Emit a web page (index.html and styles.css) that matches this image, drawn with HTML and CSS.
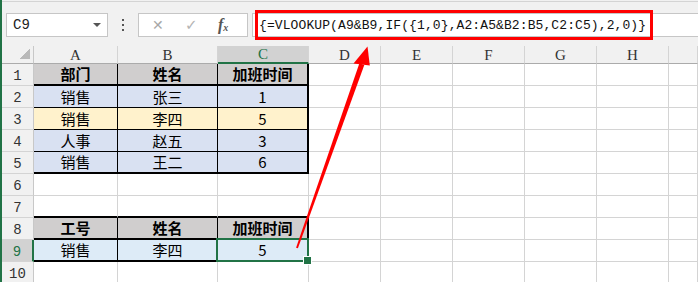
FILE: index.html
```html
<!DOCTYPE html>
<html lang="zh">
<head>
<meta charset="utf-8">
<title>VLOOKUP</title>
<link rel="stylesheet" href="styles.css">
</head>
<body>
<div class="fbar">
  <div class="namebox"><span class="nb-text">C9</span><span class="nb-drop"></span></div>
  <div class="dots"><i></i><i></i><i></i></div>
  <div class="btnbox">
    <span class="fb-x">✕</span>
    <span class="fb-ok">✓</span>
    <span class="fb-fx">f<sub>x</sub></span>
  </div>
  <div class="fbox">
    <span class="formula">{=VLOOKUP(A9&amp;B9,IF({1,0},A2:A5&amp;B2:B5,C2:C5),2,0)}</span>
    <span class="redbox"></span>
  </div>
</div>
<div class="sheet">
  <div class="c corner"><span class="tri"></span></div>
  <div class="c ch">A</div><div class="c ch">B</div><div class="c ch sel">C</div><div class="c ch">D</div><div class="c ch">E</div><div class="c ch">F</div><div class="c ch">G</div><div class="c ch">H</div><div class="c ch"></div>

  <div class="c rh">1</div>
  <div class="c th br1 bb2">部门</div><div class="c th br1 bb2">姓名</div><div class="c th br2 bb2">加班时间</div>
  <div class="c"></div><div class="c"></div><div class="c"></div><div class="c"></div><div class="c"></div><div class="c"></div>

  <div class="c rh">2</div>
  <div class="c blue br1 bb1">销售</div><div class="c blue br1 bb1">张三</div><div class="c blue br2 bb1">1</div>
  <div class="c"></div><div class="c"></div><div class="c"></div><div class="c"></div><div class="c"></div><div class="c"></div>

  <div class="c rh">3</div>
  <div class="c yel br1 bb1">销售</div><div class="c yel br1 bb1">李四</div><div class="c yel br2 bb1">5</div>
  <div class="c"></div><div class="c"></div><div class="c"></div><div class="c"></div><div class="c"></div><div class="c"></div>

  <div class="c rh">4</div>
  <div class="c blue br1 bb1">人事</div><div class="c blue br1 bb1">赵五</div><div class="c blue br2 bb1">3</div>
  <div class="c"></div><div class="c"></div><div class="c"></div><div class="c"></div><div class="c"></div><div class="c"></div>

  <div class="c rh">5</div>
  <div class="c blue br1 bb2">销售</div><div class="c blue br1 bb2">王二</div><div class="c blue br2 bb2">6</div>
  <div class="c"></div><div class="c"></div><div class="c"></div><div class="c"></div><div class="c"></div><div class="c"></div>

  <div class="c rh">6</div>
  <div class="c"></div><div class="c"></div><div class="c"></div>
  <div class="c"></div><div class="c"></div><div class="c"></div><div class="c"></div><div class="c"></div><div class="c"></div>

  <div class="c rh">7</div>
  <div class="c bb2"></div><div class="c bb2"></div><div class="c bb2"></div>
  <div class="c"></div><div class="c"></div><div class="c"></div><div class="c"></div><div class="c"></div><div class="c"></div>

  <div class="c rh">8</div>
  <div class="c th br1 bb2">工号</div><div class="c th br1 bb2">姓名</div><div class="c th br2 bb2">加班时间</div>
  <div class="c"></div><div class="c"></div><div class="c"></div><div class="c"></div><div class="c"></div><div class="c"></div>

  <div class="c rh sel">9</div>
  <div class="c blue2 br1 bb2">销售</div><div class="c blue2 br1 bb2">李四</div><div class="c blue2 br2 bb2 active">5</div>
  <div class="c"></div><div class="c"></div><div class="c"></div><div class="c"></div><div class="c"></div><div class="c"></div>

  <div class="c rh">10</div>
  <div class="c"></div><div class="c"></div><div class="c"></div>
  <div class="c"></div><div class="c"></div><div class="c"></div><div class="c"></div><div class="c"></div><div class="c"></div>
</div>
<svg class="arrow" width="698" height="282" viewBox="0 0 698 282">
  <polygon points="296.1,247.7 297.9,248.3 364.3,64.9 359.4,63.3" fill="#ff0000"/>
  <polygon points="367.5,46.5 353.5,63.5 369.8,65.5" fill="#ff0000"/>
</svg>
</body>
</html>
```
FILE: styles.css
```css
* { box-sizing: border-box; }
html, body { margin: 0; padding: 0; }
body {
  width: 698px;
  height: 282px;
  overflow: hidden;
  background: #ffffff;
  border-left: 2px solid #217346;
  font-family: "Noto Sans CJK SC", "Noto Sans", sans-serif;
}

/* formula bar */
.fbar {
  height: 46px;
  display: flex;
  align-items: flex-start;
  padding-top: 13px;
  background: linear-gradient(#f1f1f1 1px, #d4d4d4 1px, #d4d4d4 2px, #f1f1f1 2px);
}
.namebox {
  margin-left: 4px;
  width: 102px;
  height: 24px;
  background: #fff;
  border: 1px solid #c6c6c6;
  display: flex;
  align-items: center;
  justify-content: space-between;
  padding: 0 6px 0 6px;
}
.nb-text {
  font-family: "Liberation Mono", monospace;
  font-size: 14px;
  color: #222;
}
.nb-drop {
  width: 0; height: 0;
  border-left: 4px solid transparent;
  border-right: 4px solid transparent;
  border-top: 4px solid #555;
}
.dots {
  width: 30px;
  height: 24px;
  display: flex;
  flex-direction: column;
  align-items: center;
  justify-content: center;
  gap: 3px;
}
.dots i {
  display: block;
  width: 2px;
  height: 2px;
  background: #555;
}
.btnbox {
  width: 110px;
  height: 24px;
  background: #fff;
  border: 1px solid #c6c6c6;
  display: flex;
  align-items: center;
  padding-left: 13px;
}
.fb-x { color: #a8a8a8; font-size: 14px; font-family: "DejaVu Sans", sans-serif; width: 33px; }
.fb-ok { color: #b4b4b4; font-size: 15px; font-family: "DejaVu Sans", sans-serif; font-weight: bold; width: 33px; }
.fb-fx {
  color: #555;
  font-family: "Liberation Serif", serif;
  font-style: italic;
  font-size: 16px;
  font-weight: bold;
}
.fb-fx sub { font-size: 10px; vertical-align: -1px; }
.fbox {
  position: relative;
  margin-left: 4px;
  flex: 1;
  height: 24px;
  background: #fff;
  border: 1px solid #c6c6c6;
  border-right: none;
  display: flex;
  align-items: center;
  padding-left: 6px;
}
.formula {
  font-family: "Liberation Mono", monospace;
  font-size: 13px;
  letter-spacing: 0.1px;
  color: #111;
  white-space: nowrap;
}
.redbox {
  position: absolute;
  left: 2px;
  top: -4px;
  width: 398px;
  height: 30px;
  border: 3px solid #ff0000;
}

/* sheet */
.sheet {
  display: grid;
  grid-template-columns: 32px 84px 100px 91px 72px 72px 72px 72px 72px 29px;
  grid-template-rows: 18px repeat(10, 22px);
}
.c {
  border-right: 1px solid #d4d4d4;
  border-bottom: 1px solid #d4d4d4;
  display: flex;
  align-items: center;
  justify-content: center;
  font-size: 15px;
  line-height: 20px;
  color: #000;
  white-space: nowrap;
}
.corner {
  background: #f1f1f1;
  border-right-color: #c8c8c8;
  border-bottom-color: #ababab;
  justify-content: flex-end;
  align-items: flex-end;
  padding: 0 3px 4px 0;
}
.tri {
  width: 10px;
  height: 10px;
  background: linear-gradient(135deg, transparent 50%, #b9b9b9 50%);
}
.ch {
  background: #f1f1f1;
  border-bottom-color: #ababab;
  font-family: "Liberation Serif", serif;
  font-size: 15px;
  color: #333;
}
.rh {
  background: #f1f1f1;
  border-right-color: #c8c8c8;
  border-bottom-color: #d4d4d4;
  font-family: "Liberation Mono", monospace;
  font-size: 14px;
  color: #333;
  padding-top: 3px;
}
.ch.sel {
  background: #d2d2d2;
  color: #217346;
  border-bottom: 2px solid #217346;
}
.rh.sel {
  background: #d2d2d2;
  color: #217346;
  border-right: 2px solid #217346;
}

.th { background: #d0cece; font-weight: bold; }
.blue { background: #d9e1f2; }
.yel { background: #fff2cc; }
.blue2 { background: #ddebf7; }

.br1 { border-right: 1px solid #000; }
.br2 { border-right: 2px solid #000; }
.bb1 { border-bottom: 1px solid #000; }
.bb2 { border-bottom: 2px solid #000; }

.active { position: relative; }
.active::before {
  content: "";
  position: absolute;
  left: -2px;
  top: -2px;
  right: -2px;
  bottom: -2px;
  border: 2px solid #217346;
}
.active::after {
  content: "";
  position: absolute;
  right: -5px;
  bottom: -5px;
  width: 7px;
  height: 7px;
  background: #217346;
  border: 1px solid #fff;
}

.arrow {
  position: absolute;
  left: 0;
  top: 0;
  pointer-events: none;
}
```
